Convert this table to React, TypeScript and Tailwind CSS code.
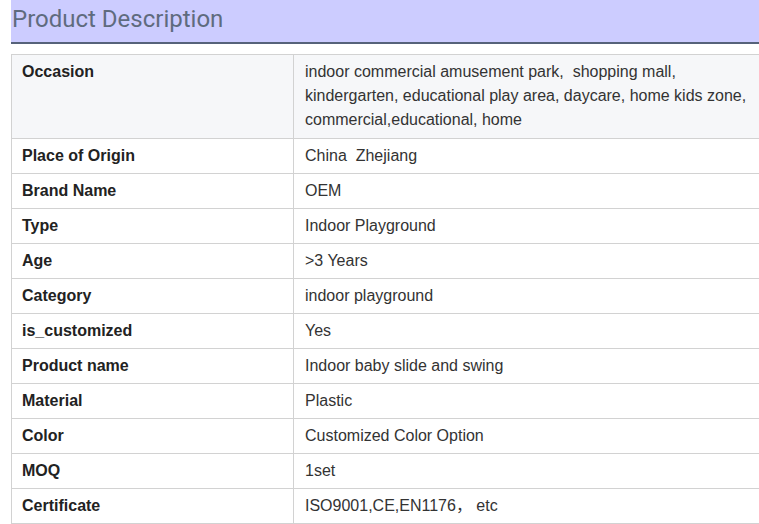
import React from "react";

const rows: [string, string][] = [
  ["Occasion", "indoor commercial amusement park,\u00a0 shopping mall, kindergarten, educational play area, daycare, home kids zone, commercial,educational, home"],
  ["Place of Origin", "China\u00a0 Zhejiang"],
  ["Brand Name", "OEM"],
  ["Type", "Indoor Playground"],
  ["Age", ">3 Years"],
  ["Category", "indoor playground"],
  ["is_customized", "Yes"],
  ["Product name", "Indoor baby slide and swing"],
  ["Material", "Plastic"],
  ["Color", "Customized Color Option"],
  ["MOQ", "1set"],
  ["Certificate", "ISO9001,CE,EN1176\uff0c etc"],
];

export default function App() {
  return (
    <div className="w-[759px] h-[524px] overflow-hidden bg-white pl-[11px]">
      <div className="h-[44px] bg-[#ccccff] border-b-2 border-[#56627a] flex items-center pl-[1px] pb-[5px]">
        <h2 className="text-[24px] leading-none text-[#5f6b7e]" style={{ fontFamily: "Roboto, 'Noto Sans', sans-serif" }}>
          Product Description
        </h2>
      </div>
      <table
        className="mt-[10px] w-[760px] border-collapse text-[16px] leading-[24px] text-[#333]"
        style={{ fontFamily: "'Liberation Sans', Arial, 'Noto Sans CJK SC', sans-serif" }}
      >
        <tbody>
          {rows.map(([k, v], i) => (
            <tr key={k} className={i === 0 ? "bg-[#f6f7f9]" : "bg-white"}>
              <td className={`w-[282px] border border-[#d2d2d2] px-[10px] pt-[5px] align-top font-bold text-[#222] ${i === 0 ? "pb-[6px]" : "pb-[5px]"}`}>{k}</td>
              <td className={`border border-[#d2d2d2] pl-[11px] pr-[10px] pt-[5px] align-top ${i === 0 ? "pb-[6px]" : "pb-[5px]"}`}>{v}</td>
            </tr>
          ))}
        </tbody>
      </table>
    </div>
  );
}
